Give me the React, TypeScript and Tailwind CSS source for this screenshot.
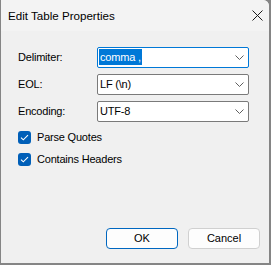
import { ReactNode } from "react";

const font = { fontFamily: '"Liberation Sans", Arial, sans-serif' };

function Chevron() {
  return (
    <svg width="9" height="5" viewBox="0 0 9 5" className="shrink-0">
      <path d="M0.5 0.5 L4.5 4.5 L8.5 0.5" fill="none" stroke="#5f5f5f" strokeWidth="1" />
    </svg>
  );
}

function Combo({ value, focused }: { value: ReactNode; focused?: boolean }) {
  return (
    <div
      className={
        "flex h-[21px] w-[152px] items-center justify-between rounded-[2px] border bg-white pl-[1px] pr-[4px] " +
        (focused ? "border-[#0078d7]" : "border-[#7a7a7a]")
      }
    >
      <div className="text-[11px] leading-none tracking-[-0.2px] text-black">{value}</div>
      <Chevron />
    </div>
  );
}

function Row({ label, children }: { label: string; children: ReactNode }) {
  return (
    <div className="flex items-center">
      <div className="w-[79px] text-[11px] tracking-[-0.2px] text-black">{label}</div>
      {children}
    </div>
  );
}

function Check({ label }: { label: string }) {
  return (
    <div className="flex h-[13px] items-center gap-[6px]">
      <div className="flex h-[13px] w-[13px] items-center justify-center rounded-[3px] bg-[#005fb8]">
        <svg width="9" height="7" viewBox="0 0 9 7">
          <path d="M1 3.6 L3.3 5.8 L8 1.2" fill="none" stroke="white" strokeWidth="1.1" />
        </svg>
      </div>
      <span className="text-[11px] leading-none tracking-[-0.2px] text-black">{label}</span>
    </div>
  );
}

export default function App() {
  return (
    <div className="flex h-[265px] w-[271px] bg-[#858585] pl-[1px]" style={font}>
      <div className="flex h-[263px] w-[268px] flex-col overflow-hidden rounded-tr-[6px] bg-[#f0f0f0]">
        {/* title bar */}
        <div className="flex h-[31px] items-center justify-between bg-[#f3f3f3] pl-[7px] pr-[6px]">
          <span className="text-[11.6px] text-black">Edit Table Properties</span>
          <svg width="11" height="11" viewBox="0 0 11 11">
            <path d="M0.5 0.5 L10.5 10.5 M10.5 0.5 L0.5 10.5" stroke="#1a1a1a" strokeWidth="1" />
          </svg>
        </div>

        <div className="flex flex-1 flex-col pl-[17px] pt-[16px]">
          <div className="flex flex-col gap-[6px]">
            <Row label="Delimiter:">
              <Combo
                focused
                value={
                  <span className="bg-[#0078d7] px-[1px] py-[2px] text-white">comma ,</span>
                }
              />
            </Row>
            <Row label="EOL:">
              <Combo value={<span className="px-[1px]">LF (\n)</span>} />
            </Row>
            <Row label="Encoding:">
              <Combo value={<span className="px-[1px]">UTF-8</span>} />
            </Row>
          </div>

          <div className="mt-[9px] flex flex-col gap-[9px]">
            <Check label="Parse Quotes" />
            <Check label="Contains Headers" />
          </div>

          <div className="mt-auto mb-[14px] flex justify-end gap-[10px] pr-[9px]">
            <button className="h-[21px] w-[72px] rounded-[4px] border border-[#0067c0] bg-[#fdfdfd] text-[11px] text-black">
              OK
            </button>
            <button className="h-[21px] w-[72px] rounded-[4px] border border-[#d0d0d0] bg-[#fdfdfd] text-[11px] text-black">
              Cancel
            </button>
          </div>
        </div>
      </div>
    </div>
  );
}
